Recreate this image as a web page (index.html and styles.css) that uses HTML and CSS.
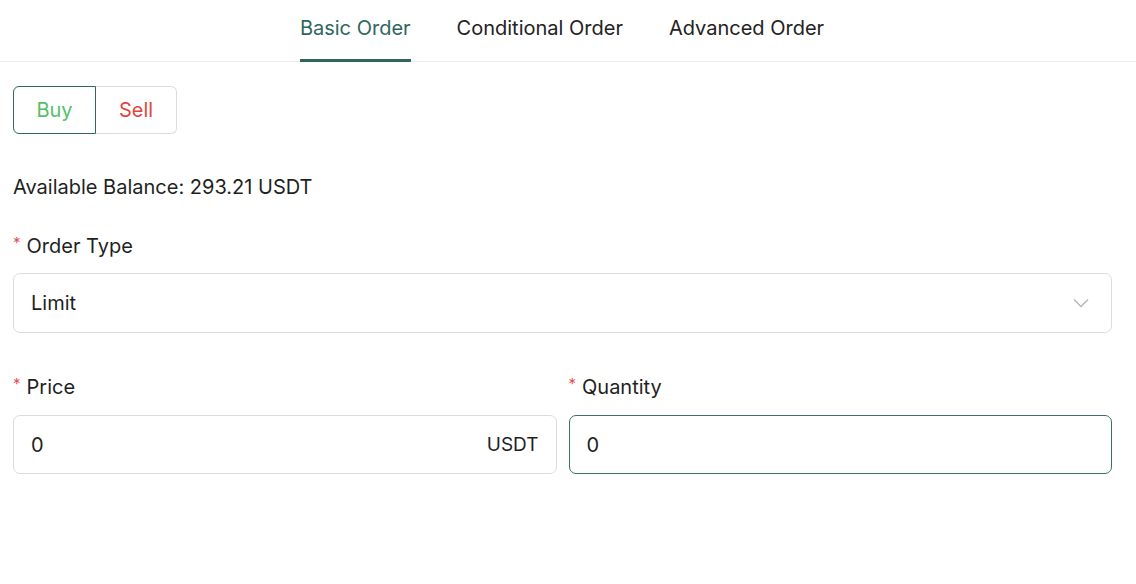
FILE: index.html
```html
<!DOCTYPE html>
<html>
<head>
<meta charset="utf-8">
<link rel="stylesheet" href="styles.css">
</head>
<body>
<div class="page">
  <nav class="tabs">
    <div class="tab active">Basic Order</div>
    <div class="tab">Conditional Order</div>
    <div class="tab">Advanced Order</div>
  </nav>
  <div class="content">
    <div class="side">
      <div class="side-btn buy">Buy</div>
      <div class="side-btn sell">Sell</div>
    </div>
    <div class="balance">Available Balance: 293.21 USDT</div>
    <div class="field">
      <div class="label"><span class="req">*</span>Order Type</div>
      <div class="box select">
        <span>Limit</span>
        <svg class="chev" width="16" height="10" viewBox="0 0 16 10"><path d="M1 1.5 L8 8.5 L15 1.5" fill="none" stroke="#b5b5b5" stroke-width="1.3"/></svg>
      </div>
    </div>
    <div class="row">
      <div class="field">
        <div class="label"><span class="req">*</span>Price</div>
        <div class="box"><span>0</span><span class="suffix">USDT</span></div>
      </div>
      <div class="field">
        <div class="label"><span class="req">*</span>Quantity</div>
        <div class="box focused"><span>0</span></div>
      </div>
    </div>
  </div>
</div>
</body>
</html>
```

FILE: styles.css
```css
* { box-sizing: border-box; }
body {
  margin: 0;
  background: #fff;
  font-family: Inter, "Noto Sans", sans-serif;
  color: #1f1f1f;
}
.page {
  width: 1136px;
}
.tabs {
  display: flex;
  justify-content: center;
  gap: 46px;
  height: 62px;
  border-bottom: 1px solid #ececec;
  padding-left: 10px;
  padding-right: 22px;
  width: 1136px;
}
.tab {
  font-size: 20px;
  line-height: 57px;
  color: #222;
  border-bottom: 3px solid transparent;
  height: 62px;
}
.tab.active {
  color: #2f665f;
  border-bottom-color: #2f665f;
}
.content {
  padding: 24px 24px 0 13px;
}
.side {
  display: flex;
  width: 164px;
  height: 48px;
}
.side-btn {
  flex: 1;
  display: flex;
  align-items: center;
  justify-content: center;
  font-size: 20px;
  border: 1px solid #dcdcdc;
}
.buy {
  color: #56bf6a;
  border-color: #2f665f;
  border-radius: 6px 0 0 6px;
  flex: 0 0 83px;
}
.sell {
  color: #e0463f;
  border-left: none;
  border-radius: 0 6px 6px 0;
}
.balance {
  font-size: 20px;
  margin-top: 41px;
  line-height: 24px;
}
.field { display: flex; flex-direction: column; flex: 1; }
.content > .field { margin-top: 35px; }
.label {
  font-size: 20px;
  line-height: 24px;
  display: flex;
  align-items: flex-start;
}
.req {
  color: #ee4d4d;
  font-size: 15px;
  margin-right: 6px;
  line-height: 18px;
}
.box {
  margin-top: 15px;
  height: 60px;
  border: 1px solid #dcdcdc;
  border-radius: 7px;
  display: flex;
  align-items: center;
  justify-content: space-between;
  padding: 0 17px 0 17px;
  font-size: 20px;
}
.select { padding-right: 22px; }
.focused { border-color: #3b6f68; }
.suffix { font-size: 19px; }
.row {
  display: flex;
  gap: 12px;
  margin-top: 42px;
}
.row .box { height: 59px; margin-top: 16px; }
```
